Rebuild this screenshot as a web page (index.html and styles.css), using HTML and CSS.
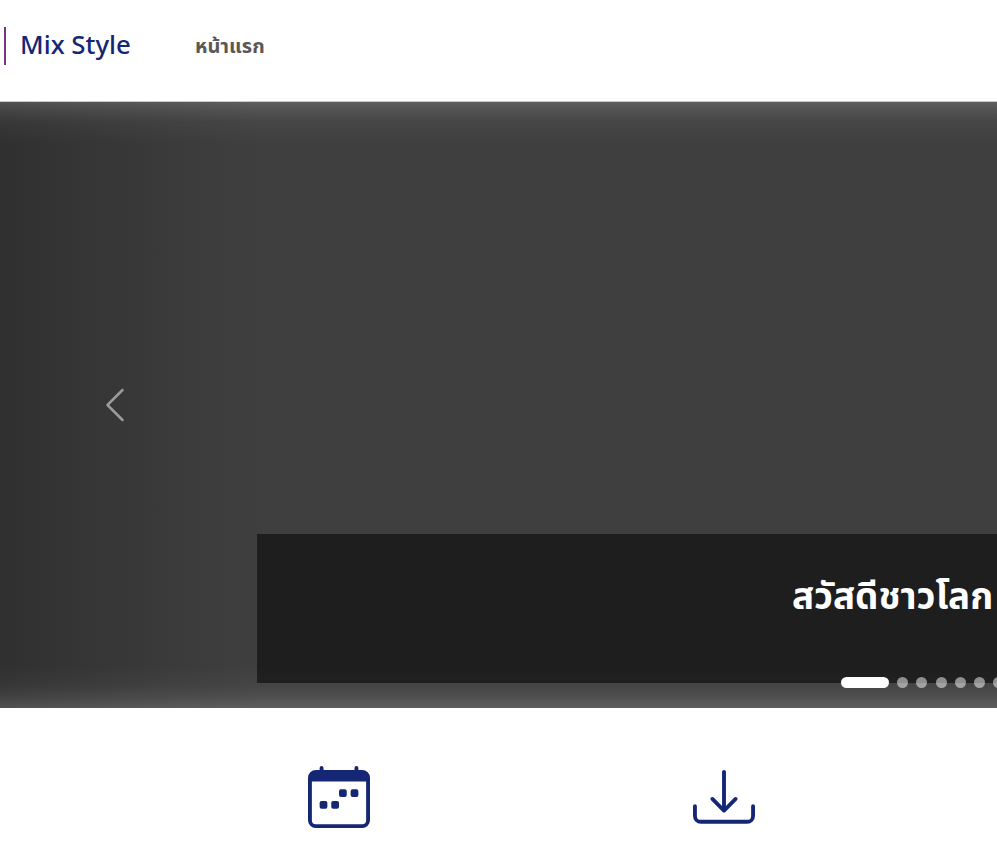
FILE: index.html
```html
<!DOCTYPE html>
<html lang="th">
<head>
<meta charset="utf-8">
<title>Mix Style</title>
<link rel="stylesheet" href="styles.css">
</head>
<body>
<header class="navbar">
  <a class="brand">Mix Style</a>
  <nav><a class="nav-link">หน้าแรก</a></nav>
</header>
<section class="hero">
  <div class="slide">
    <div class="caption"><h1>สวัสดีชาวโลก</h1></div>
  </div>
  <svg class="prev" viewBox="0 0 16 16"><path d="M11.354 1.646a.5.5 0 0 1 0 .708L5.707 8l5.647 5.646a.5.5 0 0 1-.708.708l-6-6a.5.5 0 0 1 0-.708l6-6a.5.5 0 0 1 .708 0z"/></svg>
  <div class="indicators"><i class="active"></i><i></i><i></i><i></i><i></i><i></i><i></i></div>
</section>
<section class="features">
  <svg class="icon" viewBox="0 0 16 16"><path d="M11 6.5a.5.5 0 0 1 .5-.5h1a.5.5 0 0 1 .5.5v1a.5.5 0 0 1-.5.5h-1a.5.5 0 0 1-.5-.5zm-3 0a.5.5 0 0 1 .5-.5h1a.5.5 0 0 1 .5.5v1a.5.5 0 0 1-.5.5h-1a.5.5 0 0 1-.5-.5zm-5 3a.5.5 0 0 1 .5-.5h1a.5.5 0 0 1 .5.5v1a.5.5 0 0 1-.5.5h-1a.5.5 0 0 1-.5-.5zm3 0a.5.5 0 0 1 .5-.5h1a.5.5 0 0 1 .5.5v1a.5.5 0 0 1-.5.5h-1a.5.5 0 0 1-.5-.5z"/><path d="M3.5 0a.5.5 0 0 1 .5.5V1h8V.5a.5.5 0 0 1 1 0V1h1a2 2 0 0 1 2 2v11a2 2 0 0 1-2 2H2a2 2 0 0 1-2-2V3a2 2 0 0 1 2-2h1V.5a.5.5 0 0 1 .5-.5zM1 4v10a1 1 0 0 0 1 1h12a1 1 0 0 0 1-1V4H1z"/></svg>
  <svg class="icon" viewBox="0 0 16 16"><path d="M.5 9.9a.5.5 0 0 1 .5.5v2.5a1 1 0 0 0 1 1h12a1 1 0 0 0 1-1v-2.5a.5.5 0 0 1 1 0v2.5a2 2 0 0 1-2 2H2a2 2 0 0 1-2-2v-2.5a.5.5 0 0 1 .5-.5z"/><path d="M7.646 11.854a.5.5 0 0 0 .708 0l3-3a.5.5 0 0 0-.708-.708L8.5 10.293V1.5a.5.5 0 0 0-1 0v8.793L5.354 8.146a.5.5 0 1 0-.708.708l3 3z"/></svg>
</section>
</body>
</html>
```
FILE: styles.css
```css
* { box-sizing: border-box; }
body {
  margin: 0;
  background: #fff;
  font-family: "Noto Sans", "Noto Sans Thai", sans-serif;
}
.navbar {
  display: flex;
  align-items: flex-start;
  height: 102px;
  padding: 27px 0 0 4px;
  border-bottom: 1px solid #c9cbc9;
}
.brand {
  width: 191px;
  height: 38px;
  padding-left: 14px;
  border-left: 2px solid #7a367b;
  color: #152774;
  font-size: 25.8px;
  font-weight: 500;
  line-height: 35px;
}
.nav-link {
  color: #5c5754;
  font-size: 20px;
  font-weight: 700;
  line-height: 38px;
}
.hero {
  position: relative;
  height: 606px;
  overflow: hidden;
}
.slide {
  width: 1785px;
  height: 606px;
  padding-top: 432px;
  background:
    linear-gradient(to bottom, rgba(255,255,255,.16), rgba(255,255,255,.1) 8px, rgba(255,255,255,.035) 20px, transparent 42px),
    linear-gradient(to top, rgba(255,255,255,.16), rgba(255,255,255,.09) 10px, rgba(255,255,255,.035) 22px, transparent 42px),
    linear-gradient(to right, #303030, #353535 80px, #3b3b3b 180px, #3f3f3f 260px);
}
.caption {
  width: 1271px;
  height: 149px;
  margin: 0 auto;
  padding-top: 35px;
  background: rgba(0,0,0,.52);
  color: #fff;
  text-align: center;
}
.caption h1 {
  margin: 0;
  font-size: 36.8px;
  line-height: 52px;
  font-weight: 700;
}
.prev {
  position: absolute;
  left: 95px;
  top: 283px;
  width: 40px;
  height: 40px;
  fill: #9c9c9c;
}
.indicators {
  position: absolute;
  left: 841px;
  top: 575px;
  display: flex;
  gap: 8.2px;
}
.indicators i {
  flex: none;
  width: 11px;
  height: 11px;
  border-radius: 6px;
  background: rgba(255,255,255,.5);
}
.indicators .active {
  width: 48px;
  background: #fff;
}
.features {
  display: flex;
  gap: 323px;
  padding: 58px 0 0 308px;
}
.icon {
  flex: none;
  width: 62px;
  height: 62px;
  fill: #152774;
}
```
